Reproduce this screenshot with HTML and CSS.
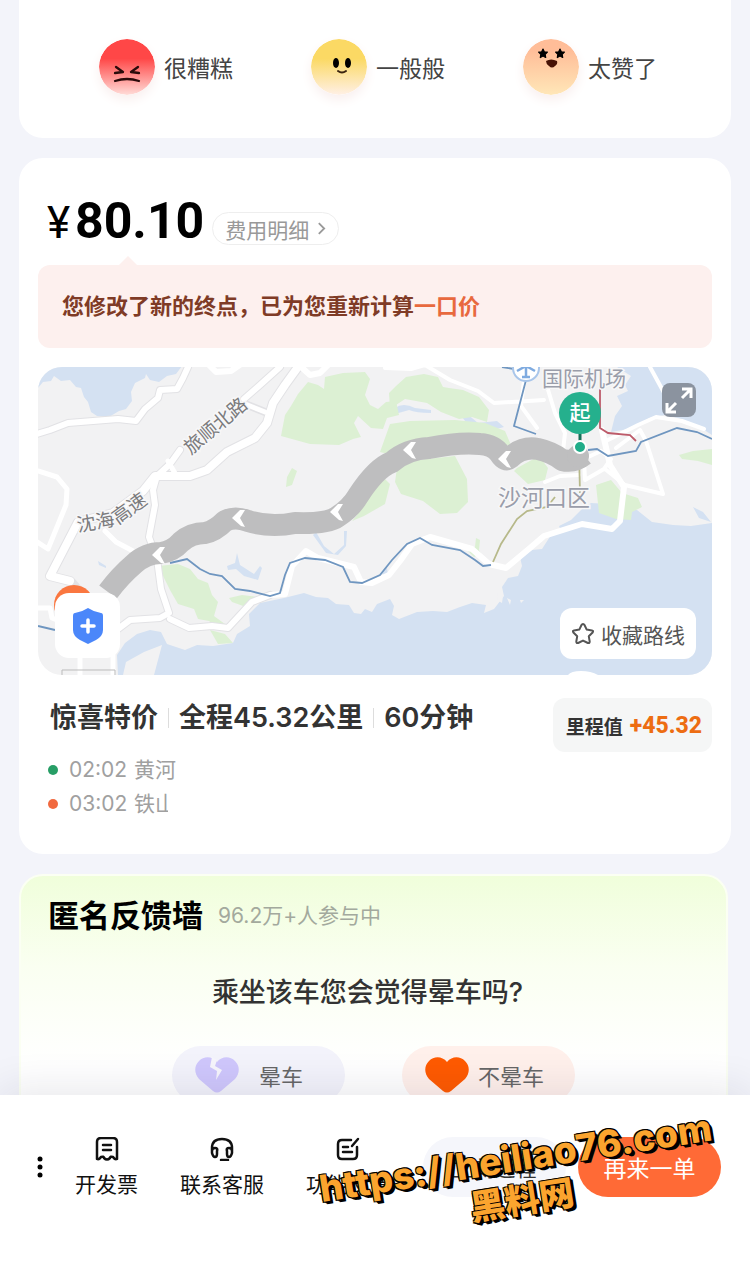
FILE: index.html
```html
<!DOCTYPE html>
<html lang="zh-CN">
<head>
<meta charset="utf-8">
<meta name="viewport" content="width=device-width, initial-scale=1">
<title>行程完成</title>
<link rel="stylesheet" href="styles.css">
</head>
<body>
<main class="content">
  <section class="card rating">
    <button class="rate" type="button">
      <svg class="face" viewBox="0 0 56 56" aria-hidden="true">
        <defs><linearGradient id="bad" x1="0" y1="0" x2="0" y2="1"><stop offset=".35" stop-color="#ff4747"/><stop offset="1" stop-color="#ffdcd8"/></linearGradient></defs>
        <circle cx="28" cy="28" r="28" fill="url(#bad)"/>
        <g fill="none" stroke="#2a0b0b" stroke-width="2.300" stroke-linecap="round" stroke-linejoin="round"><path d="M17 28l7 5-8 1M39 28l-7 5 8 1M16 42q12-4 24 0"/></g>
      </svg>
      <span>很糟糕</span>
    </button>
    <button class="rate" type="button">
      <svg class="face" viewBox="0 0 56 56" aria-hidden="true">
        <defs><linearGradient id="mid" x1="0" y1="0" x2="0" y2="1"><stop offset=".35" stop-color="#fbd964"/><stop offset="1" stop-color="#fff0e6"/></linearGradient></defs>
        <circle cx="28" cy="28" r="28" fill="url(#mid)"/>
        <ellipse cx="25" cy="24" rx="3" ry="5"/><ellipse cx="37" cy="24" rx="3" ry="5"/>
        <path d="M27 32q4 3 8 0" fill="none" stroke="#3a2410" stroke-width="2" stroke-linecap="round"/>
      </svg>
      <span>一般般</span>
    </button>
    <button class="rate" type="button">
      <svg class="face" viewBox="0 0 56 56" aria-hidden="true">
        <defs><linearGradient id="good" x1="0" y1="0" x2="0" y2="1"><stop offset=".2" stop-color="#ffbd98"/><stop offset="1" stop-color="#ffe7b8"/></linearGradient></defs>
        <circle cx="28" cy="28" r="28" fill="url(#good)"/>
        <path id="eye" d="M20 10l1.300 2.800 3.100.4-2.200 2.200.5 3.100-2.700-1.500-2.700 1.500.5-3.100-2.200-2.200 3.100-.4z" stroke="#000" stroke-width="1.200" stroke-linejoin="round"/>
        <use href="#eye" x="17"/>
        <path d="M23 22q5-3 11 0 1 3-2 5-3 3-6 0-3-2-3-5z" fill="#471205"/>
      </svg>
      <span>太赞了</span>
    </button>
  </section>

  <section class="card trip">
    <div class="price-row">
      <span class="yen">¥</span><strong class="price">80.10</strong>
      <a class="detail" href="#fee">费用明细
        <svg viewBox="0 0 10 16" aria-hidden="true"><path d="M2 2l6 6-6 6" fill="none" stroke="#999" stroke-width="2"/></svg>
      </a>
    </div>
    <p class="notice">您修改了新的终点，已为您重新计算<em>一口价</em></p>

    <div class="map">
      <svg class="map-art" viewBox="38 367 674 308" preserveAspectRatio="xMidYMid slice" role="img" aria-label="行程路线地图">
        <rect x="38" y="367" width="674" height="308" fill="#f2f2f3"/>
        <g fill="#d4e1f2">
          <path d="M38 388l5-6 8-1 3-5 7 5 9-1 6 7 5 1 3 9 4 5 3 10 6 4 12 1 10-6 7-2 6-8-1-9 4-9 10-5 1-4 4 6 9 2 8-6 9-2 6-8 5-5H38z"/>
          <path d="M617 367h95v68l-14-9-20-8-13-3-16 3-15 10-23 4 4-16 7-10-5-10 11-5-3-6 6-9z"/>
          <path d="M118 675l-1-20 8-12 12-9 13-4 11 2 6 12 18 6 12-5 16 1 20-3 4-9 13-8-1-12 11-11 24-5 20-5 12 4 12 1 8 6 13 1 5 8 7 1 4-5 7 3 5-8 13-5 4 7-2 9 7 4 18-7 16-1 14 1 13-5 12-4 14 2-2 8 10-4 10-13-2-9 6-9 10-2 4-10-2-9 12-7 10-1 9-14 10-4-2-5 12-6 11-11 9-6 18 1 28 6 15 12 21 3 18 1 28-4 8-7-4-8 15-1V675z"/>
          <path d="M395 408q8-6 20 0l16 2v3q-15 0-22-3l-14 4zM458 412l8 1 12 10 19-2 7 6-15 4-20-5zM316 532l8 14 10 8 10-9v-14h3l-1 15-8 9-12-2-13-18zM227 566l8-3 2-10 3 12 14 9 6-8 2 2-4 12-14-4-8-7-8 1zM98 561l8 5v2l-7-3zM693 507l10 5 8 10-12-4zM382 574l5-7 1 10z"/>
        </g>
        <path d="M126 662l18-10 18-7-8 30h-31z" fill="#f2f2f3"/>
        <g fill="#f2f2f3"><path d="M498 593l5 3-1 7-5-3zM507 598l4 2-1 5zM520 600h4l-3 3z"/></g>
        <g fill="#dcf0d3">
          <path d="M281 436l4-21 6-9 7-12 10-12 10 3 6 4 1-12 18-4 22-1 5 7-5 16 5 10 8 4 8-7 10-1 3 14-12 3-4 11-12-1-13-12-4 7 7 14-8 2-14 6-29-1z"/>
          <path d="M396 386l10-9 18-3 14 3 5 10 6 1 14 2 16 7 10 13-2 12-15-5-13 2-18-7-14-9-22-4-15 10-1-16zM390 424l20-3 45-1 30 3 20 8 6 14-111 12-20-5z"/>
          <path d="M397 468l20-8 38-4 12 23 1 23-11 11-17 1-17-13-22-7-6-12zM517 468l22-12 9 12-3 12-17 4-14-13zM357 515l10-20 18-16 5 5-5 20-21 12-12 5zM287 477l5-9 5 3-5 14-6 2zM596 485l15-5 11 13 16 5 4 9-10 5-1 8-15-1-17-6zM679 455l14-4 19-2v16l-14-4-16-2z"/>
          <path d="M158 566l20-2 12 5 8 10 10 4 4 12 6 7-4 14 15 11-10 3-10-9-11-2-4-10-16-5-8-14zM229 598l13-3 16 2-12 10-14-5zM210 630l15 4 8 9-15 1zM467 550l8-3 1-9 4 2-1 10 2 4-7 3z"/>
        </g>
        <g fill="none" stroke-linejoin="round" stroke-linecap="round">
          <g stroke="#e2e2e5" stroke-width="8">
            <path d="M30 436l20-6 18-7 50-4 18 2 9-12 13-11 2-8 17-1 6-11 5-11M280 367l-20 18-16 14M180 450l-10 14-13 12-4 14 2 15-6 32 8 22 4 30 8 24-9 5-30 2-16 12M170 619l19 9 23-2 16 2 12-13 12-13 18-7M245 404l20 8"/>
            <path d="M298 367l-13 18-12 18-6 20-12 15-28 14-20 18-17 6h-35l-12 15-30 22-35 9-28 54 20 5 14 16" stroke-width="10"/>
          </g>
          <g stroke="#fff" stroke-width="6">
            <path d="M30 436l20-6 18-7 50-4 18 2 9-12 13-11 2-8 17-1 6-11 5-11M210 366l6 6 15-1 10-7M300 366l10 9 10-2 10-10"/>
            <path d="M280 367l-20 18-16 14M180 450l-10 14-13 12-4 14 2 15-6 32 8 22 4 30 8 24-9 5-30 2-16 12M170 619l19 9 23-2 16 2 12-13 12-13 18-7 15-1 7-28 14-15 12 7 36 9 7 15 11 1 17-8 11-14 12-17 18-7 42 12 17 15 17 4 24-20 14-12 38-12 30 5 8-8 4-34-14-22-8-35"/>
            <path d="M168 461l8 14M245 404l20 8M38 471l19 6 10 12-1 16-18 44-14-9M105 531l11 11 17 9M38 608h12l2 10 10 4M80 655v20M113 655v20" stroke-width="5"/>
            <path d="M385 368l26 1 14-4 25 15 28 11 16 12 50-3M546 383l9 30 10 20-2 18M525 372l-4 34 16 22M605 469l20 16 38 9-17-53-6-11-24 18M608 440l30-15 18-8 26 4 22 8M650 367l24 44M545 482l15-6 19-1M585 480l19-11 7-10-10-8-17 8z" stroke-width="4"/>
          </g>
          <path d="M298 367l-13 18-12 18-6 20-12 15-28 14-20 18-17 6h-35l-12 15-30 22-35 9-28 54 20 5" stroke="#fff" stroke-width="8"/>
        </g>
        <g fill="none" stroke-width="1.800" stroke="#6f96c0">
          <path d="M170 563l17-4 13 10 10 5 12 2 13 13 15 2 20 5 10-3 5-18 5-12 15-5 20 2 18 7 7 15 12 1 18-8 12-15 15-16 13-6 12 7 28 5 15 10 8 6 8-1M526 380l-12 46 22 8M588 450l9-1 11 7 28-5 5-9 36-14 20 4 15 7M38 626l17 4M502 367l12 2"/>
          <path d="M493 562l8-18 16-25 10-8 20-4 8-10M579 453l1 40" stroke="#b7b98a"/>
          <path d="M600 388v40l8 5 22 2 6 6" stroke="#bd5b6a"/>
        </g>
        <path d="M108 592q12-16 26-28 12-11 27-11 12-2 20-11 10-9 24-9 10-2 20-12 10-5 23 0 22 7 47 2 32 1 42-6 14-9 21-21 18-28 34-34 15-13 37-14 30-6 51-4 14 1 20 10 5 8 10 4 12-12 28-9 14 3 24 11 12 3 22-5" fill="none" stroke="#bebebf" stroke-width="22" stroke-linejoin="round"/>
        <circle cx="578" cy="456" r="11" fill="#bebebf"/>
        <g fill="#fff">
          <path id="chev" d="M403 450l8-8h5l-5 8 5 9-4-1z"/>
          <use href="#chev" x="95" y="9"/><use href="#chev" x="-171" y="68"/><use href="#chev" x="-251" y="105"/><use href="#chev" x="-73" y="62"/>
        </g>
        <g class="map-label">
          <text x="214" y="433" transform="rotate(-40 214 424)" text-anchor="middle" class="street">旅顺北路</text>
          <text x="78" y="532" transform="rotate(-10 78 532)" class="street">沈海</text>
          <text x="118" y="525" transform="rotate(-36 118 525)" class="street">高速</text>
          <text x="542" y="386" class="place">国际机场</text>
          <text x="498" y="506" class="district">沙河口区</text>
        </g>
        <circle cx="526" cy="368" r="13" fill="#fff" stroke="#a9c6ea" stroke-width="2"/>
        <path d="M526 364v13M517 371l9-5 9 5M522 377h8" stroke="#7fabe0" stroke-width="2.500" fill="none"/>
        <path d="M580 430v16" stroke="#176f59" stroke-width="3"/>
        <circle cx="580" cy="447" r="6" fill="#20ac89" stroke="#fff" stroke-width="2"/>
        <circle cx="580" cy="413" r="21" fill="#25b08d"/>
        <text x="580" y="420" text-anchor="middle" class="start">起</text>
        <circle cx="74" cy="605" r="20" fill="#fa7740"/>
        <path d="M62 675v-5h53v5" fill="none" stroke="#bbb"/>
        <path d="M568 675q3-4 13-4t17 4z" fill="#fff"/>
      </svg>
      <button class="expand" type="button" aria-label="放大地图">
        <svg viewBox="0 0 34 34" aria-hidden="true"><path d="M20 6h9v9M29 6l-9 9M5 20v9h9M5 29l9-9" fill="none" stroke="#fff" stroke-width="3"/></svg>
      </button>
      <button class="safety" type="button" aria-label="安全中心">
        <svg viewBox="0 0 30 36" aria-hidden="true"><path d="M15 0q6 4 13 5 2 0 2 3v14q0 6-7 10l-8 4-8-4q-7-4-7-10V8q0-3 2-3 7-1 13-5z" fill="#4b87fa"/><path d="M15 12v12M9 18h12" stroke="#fff" stroke-width="3.500" stroke-linecap="round"/></svg>
      </button>
      <button class="save" type="button">
        <svg viewBox="0 0 24 24" aria-hidden="true"><path d="M12 2q1 0 1.500 1l2.200 4.600 5.200.8q2 .5.700 2.100l-3.800 3.800.9 5.200q0 2-1.800 1.500L12 18.600 7.100 21q-1.800.5-1.800-1.500l.9-5.200-3.800-3.800q-1.300-1.600.7-2.100l5.200-.8L10.500 3q.5-1 1.500-1z" fill="none" stroke="#555" stroke-width="2" stroke-linejoin="round"/></svg>
        收藏路线
      </button>
    </div>

    <div class="summary">
      <div class="summary-main">
        <h2 class="facts"><span>惊喜特价</span><span>全程45.32公里</span><span>60分钟</span></h2>
        <ul class="stops">
          <li class="from"><time>02:02</time><span>黄河</span></li>
          <li class="to"><time>03:02</time><span class="clipped">铁山</span></li>
        </ul>
      </div>
      <p class="mileage">里程值 <b>+45.32</b></p>
    </div>
  </section>

  <section class="card wall">
    <header class="wall-head"><h2>匿名反馈墙</h2><span>96.2万+人参与中</span></header>
    <h3 class="question">乘坐该车您会觉得晕车吗?</h3>
    <div class="answers">
      <button class="answer sick" type="button">
        <svg viewBox="0 0 44 36" aria-hidden="true"><path d="M22 5C17-1 9-1 4 4s-5 12 0 18l14 12q4 3 8 0l14-12c5-6 5-13 0-18S27-1 22 5z" fill="#cfc7fc"/><path d="M17 0l-2 10 7 4-1 9 6-10-7-4 2-6z" fill="#f6f5fc"/></svg>
        <span>晕车</span>
      </button>
      <button class="answer fine" type="button">
        <svg viewBox="0 0 44 36" aria-hidden="true"><path d="M22 5C17-1 9-1 4 4s-5 12 0 18l14 12q4 3 8 0l14-12c5-6 5-13 0-18S27-1 22 5z" fill="#ff5a00"/></svg>
        <span>不晕车</span>
      </button>
    </div>
  </section>
</main>

<footer class="bar">
  <button class="more" type="button" aria-label="更多"><svg viewBox="0 0 6 22" aria-hidden="true"><circle cx="3" cy="3" r="2.500"/><circle cx="3" cy="11" r="2.500"/><circle cx="3" cy="19" r="2.500"/></svg></button>
  <nav class="tools">
    <a href="#invoice"><svg viewBox="0 0 24 24" aria-hidden="true"><path d="M2 22V5q0-4 4-4h12q4 0 4 4v17q-2 1-4-2-3-1-3 1-3 3-6 0 0-2-3-1-2 3-4 2zM8 8h8M8 13h8"/></svg>开发票</a>
    <a href="#service"><svg viewBox="0 0 24 24" aria-hidden="true"><path d="M2 14v-3q0-9 10-9t10 9v3M2 14q0-3 3-3t2 3v3q0 3-2 3t-3-4zM22 14q0-3-3-3t-2 3v3q0 3 2 3t3-4zM11 23h7"/></svg>联系客服</a>
    <a href="#feedback"><svg viewBox="0 0 24 24" aria-hidden="true"><path d="M15 3H6Q2 3 2 7v11q0 4 4 4h11q4 0 4-4v-8M7 10h5M7 15h9M22 2l-6 7"/></svg>功能反馈</a>
  </nav>
  <div class="actions">
    <button class="action" type="button">立刻返程</button>
    <button class="action primary" type="button">再来一单</button>
  </div>
  <div class="stamp" aria-hidden="true"><span>https://heiliao76.com</span><span class="stamp-name">黑料网</span></div>
</footer>
</body>
</html>
```
FILE: styles.css
```css
* { box-sizing: border-box; }
body {
  margin: 0;
  height: 100vh;
  display: flex;
  flex-direction: column;
  overflow: hidden;
  background: #f3f4fa;
  color: #333;
  font-family: Inter, "Noto Sans CJK SC", sans-serif;
}
button { border: 0; padding: 0; background: none; font: inherit; color: inherit; }
a { color: inherit; text-decoration: none; }
h2, h3, p, ul { margin: 0; padding: 0; }
ul { list-style: none; }
svg { display: block; flex: none; }
.rate, .detail, .save, .answer, .action { font-family: "Noto Sans CJK SC", sans-serif; line-height: 30px; }

.content {
  flex: 1;
  min-height: 0;
  overflow: auto;
  scrollbar-width: none;
  display: flex;
  flex-direction: column;
  gap: 20px;
  padding: 0 19px;
}
.card { flex: none; background: #fff; border-radius: 24px; }

.rating {
  display: flex;
  justify-content: space-between;
  padding: 39px 74px 43px 80px;
  border-radius: 0 0 24px 24px;
}
.rate { display: flex; align-items: center; gap: 9px; font-size: 23px; color: #444; }
.face { width: 56px; height: 56px; border-radius: 50%; box-shadow: 0 5px 12px #f9efee; }

.trip { padding: 32px 19px 35px; }
.price-row { display: flex; align-items: flex-end; padding: 0 9px; height: 58px; color: #000; }
.yen { width: 28px; font: 400 44px/50px Roboto, sans-serif; }
.price { font: 700 50px/54px Roboto, sans-serif; }
.detail {
  display: flex;
  align-items: center;
  gap: 8px;
  height: 33px;
  margin: 0 0 3px 8px;
  padding: 0 12px;
  border: 1px solid #eee;
  border-radius: 17px;
  font-size: 21px;
  color: #999;
}
.detail svg { width: 9px; height: 15px; }
.notice {
  position: relative;
  margin-top: 17px;
  padding: 24px;
  border-radius: 12px;
  background: #fdf0ee;
  color: #7f3b26;
  font-size: 22px;
  line-height: 35px;
  font-weight: 600;
}
.notice::before {
  content: "";
  position: absolute;
  left: 80px;
  top: -9px;
  border: 10px solid transparent;
  border-top: 0;
  border-bottom-color: #fdf0ee;
}
.notice em { font-style: normal; color: #e8693e; }

.map { position: relative; margin-top: 19px; border-radius: 24px; overflow: hidden; }
.map-art { width: 100%; height: auto; }
.map-label { fill: #7b7b7d; stroke: #f7f7f8; stroke-width: 3px; paint-order: stroke; font-family: "Noto Sans CJK SC", sans-serif; }
.street { font-size: 19px; }
.place { font-size: 21px; fill: #9a9daa; }
.district { font-size: 23px; fill: #9a9daa; }
.start { font: 500 21px "Noto Sans CJK SC", sans-serif; fill: #fff; }
.expand { position: absolute; top: 16px; right: 16px; width: 34px; height: 34px; border-radius: 8px; background: #8b939f; }
.safety {
  position: absolute;
  left: 17px;
  bottom: 17px;
  width: 65px;
  height: 65px;
  display: grid;
  place-items: center;
  border-radius: 14px;
  background: #fff;
}
.safety svg { width: 30px; height: 36px; }
.save {
  position: absolute;
  right: 16px;
  bottom: 16px;
  display: flex;
  align-items: center;
  gap: 6px;
  height: 51px;
  padding: 0 11px;
  border-radius: 12px;
  background: #fff;
  font-size: 21px;
  color: #555;
}
.save svg { width: 24px; height: 24px; }

.summary { display: flex; justify-content: space-between; align-items: flex-start; margin-top: 23px; }
.facts { display: flex; align-items: center; padding-left: 12px; font-size: 27px; line-height: 40px; font-weight: 600; color: #333; }
.facts span + span { display: flex; align-items: center; }
.facts span + span::before { content: ""; width: 1px; height: 20px; margin: 0 10px; background: #ddd; }
.stops { display: grid; gap: 4px; margin: 17px 0 0 10px; font-size: 21px; line-height: 30px; color: #a0a0a0; }
.stops li { display: flex; align-items: center; }
.stops li::before { content: ""; width: 10px; height: 10px; margin-right: 11px; border-radius: 50%; background: #279e66; }
.stops .to::before { background: #f1693f; }
.stops time { width: 65px; }
.clipped { width: 34px; overflow: hidden; white-space: nowrap; }
.mileage {
  display: flex;
  align-items: center;
  gap: 7px;
  height: 54px;
  padding: 0 10px 0 13px;
  border-radius: 12px;
  background: #f5f6f6;
  font-size: 19px;
  font-weight: 600;
}
.mileage b { font: 800 23px Roboto, sans-serif; color: #ed6d12; }

.wall {
  margin-right: 3px;
  padding: 18px 27px 40px;
  border: 2px solid #fbfff3;
  background: linear-gradient(#f0fedb, #fafff1 90px, #fff 190px);
}
.wall-head { display: flex; align-items: center; gap: 15px; }
.wall-head h2 { font-size: 31px; line-height: 44px; font-weight: 700; color: #000; }
.wall-head span { font-size: 21px; line-height: 26px; color: #a3a99d; }
.question { margin: 35px 0 33px; padding-right: 12px; font-size: 27px; line-height: 40px; font-weight: 500; text-align: center; }
.answers { display: flex; justify-content: center; gap: 57px; }
.answer { display: flex; align-items: center; width: 173px; height: 58px; padding-left: 23px; border-radius: 29px; font-size: 22px; color: #666; }
.answer svg { width: 44px; height: 36px; }
.sick { gap: 20px; background: #f3f3fb; }
.fine { gap: 9px; background: #fff0eb; }

.bar {
  position: relative;
  flex: none;
  display: flex;
  align-items: flex-start;
  min-height: 185px;
  padding: 42px 29px 0 34px;
  background: #fff;
  box-shadow: 0 -4px 40px rgba(30, 30, 60, .11);
}
.more { width: 14px; height: 60px; }
.more svg { width: 6px; height: 22px; margin-left: 3px; }
.tools { display: flex; gap: 42px; margin-left: 27px; font-size: 21px; line-height: 30px; color: #111; }
.tools a { display: flex; flex-direction: column; align-items: center; gap: 9px; white-space: nowrap; }
.tools svg { width: 24px; height: 24px; fill: none; stroke: #111; stroke-width: 2.500; stroke-linecap: round; stroke-linejoin: round; }
.actions { display: flex; gap: 12px; margin-left: auto; }
.action { width: 143px; height: 60px; border-radius: 30px; background: #f5f6fb; font-size: 21px; white-space: nowrap; }
.action.primary { background: #ff6a36; color: #fff; font-size: 23px; }
.stamp {
  position: absolute;
  right: 34px;
  top: 41px;
  display: flex;
  flex-direction: column;
  align-items: center;
  transform: rotate(-9deg);
  pointer-events: none;
  white-space: nowrap;
  color: #fba42e;
  font: 800 37px/44px Inter, sans-serif;
  text-shadow: -1px -1px #000, 1px -1px #000, -1px 1px #000, 1px 1px #000, 2px 2px #000, 3px 3px #000;
}
.stamp-name { font: 900 35px/36px "Noto Sans CJK SC", sans-serif; }
```
